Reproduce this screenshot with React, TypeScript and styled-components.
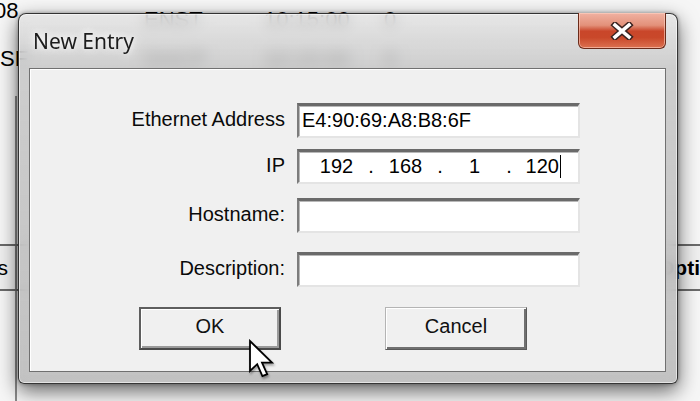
import React from "react";
import styled, { createGlobalStyle } from "styled-components";

const Global = createGlobalStyle`
  html, body { margin: 0; padding: 0; }
  body {
    width: 700px;
    height: 401px;
    overflow: hidden;
    background: #f4f4f4;
    font-family: "Liberation Sans", Arial, sans-serif;
  }
`;

const Desktop = styled.div`
  position: relative;
  width: 700px;
  height: 401px;
  overflow: hidden;
  background: #f6f6f6;
`;

/* ---------- background application (behind the dialog) ---------- */
const BgApp = styled.div`
  display: flex;
  flex-direction: column;
  width: 700px;
  height: 401px;
  color: #000;
`;

const BgRow = styled.div<{ $h: number }>`
  display: flex;
  align-items: flex-start;
  height: ${(p) => p.$h}px;
  margin-left: -6px;
  font-size: 22px;
  line-height: 22px;
  white-space: nowrap;
`;

const BgCell = styled.div<{ $w: number; $dy?: number }>`
  width: ${(p) => p.$w}px;
  flex: none;
  overflow: hidden;
  margin-top: ${(p) => p.$dy ?? 0}px;
`;

const BgSpacer = styled.div`
  flex: 1;
  display: flex;
`;

const BgStrip = styled.div`
  width: 15px;
  border-right: 2px solid #8a8a8a;
`;

const BgToolbar = styled.div`
  height: 43px;
  display: flex;
  align-items: center;
  border-top: 2px solid #6a6a6a;
  border-bottom: 2px solid #6a6a6a;
  background: #efefef;
  font-size: 21px;
  white-space: nowrap;
`;

const BgTab = styled.div<{ $w: number }>`
  width: ${(p) => p.$w}px;
  height: 100%;
  box-sizing: border-box;
  flex: none;
  display: flex;
  align-items: center;
  justify-content: flex-end;
  overflow: hidden;
  padding-right: 7px;
  border-right: 2px solid #7a7a7a;
`;

const BgRightTab = styled.div`
  margin-left: auto;
  width: 42px;
  height: 100%;
  display: flex;
  align-items: center;
  font-weight: 700;
  overflow: hidden;
`;

const BgBottom = styled.div`
  height: 110px;
  display: flex;
`;

/* ---------- the dialog window ---------- */
const Window = styled.div`
  position: absolute;
  left: 18px;
  top: 13px;
  width: 660px;
  height: 371px;
  box-sizing: border-box;
  display: flex;
  flex-direction: column;
  padding: 0 11px 11px 10px;
  border: 1px solid rgba(35, 35, 35, 0.9);
  border-radius: 8px 8px 6px 6px;
  background: linear-gradient(
    to bottom,
    rgba(226, 226, 226, 0.78) 0px,
    rgba(196, 196, 196, 0.82) 54px,
    rgba(188, 188, 188, 0.9) 100%
  );
  backdrop-filter: blur(7px);
  box-shadow: 0 7px 20px rgba(0, 0, 0, 0.6), 0 0 4px rgba(0, 0, 0, 0.35),
    inset 0 0 0 1px rgba(255, 255, 255, 0.55);
`;

const TitleBar = styled.div`
  height: 54px;
  flex: none;
  display: flex;
  justify-content: space-between;
  align-items: flex-start;
`;

const Title = styled.div`
  margin: 14px 0 0 4px;
  font-family: "Noto Sans", "Open Sans", sans-serif;
  font-size: 21px;
  line-height: 26px;
  color: #1c1c1c;
  text-shadow: 0 0 6px rgba(255, 255, 255, 0.95), 0 0 10px rgba(255, 255, 255, 0.8);
`;

const CloseButton = styled.div`
  margin-top: -1px;
  width: 88px;
  height: 36px;
  box-sizing: border-box;
  display: flex;
  align-items: center;
  justify-content: center;
  border: 1px solid #6b2b1a;
  border-top: none;
  border-radius: 0 0 6px 6px;
  background: linear-gradient(
    to bottom,
    #f0b2a2 0%,
    #e3917a 35%,
    #c9462a 52%,
    #c9482a 70%,
    #dc7150 100%
  );
  box-shadow: inset 0 0 0 1px rgba(255, 210, 195, 0.6);
`;

const Client = styled.div`
  flex: 1;
  display: flex;
  flex-direction: column;
  border: 1px solid #707070;
  background: #f0f0f0;
  box-shadow: inset 1px 1px 0 #ffffff;
  padding-top: 34px;
`;

const FormRow = styled.div<{ $mt: number }>`
  display: grid;
  grid-template-columns: 255px 283px;
  column-gap: 12px;
  align-items: center;
  margin-top: ${(p) => p.$mt}px;
`;

const Label = styled.div`
  text-align: right;
  font-size: 20px;
  line-height: 22px;
  color: #0a0a0a;
  padding-bottom: 3px;
`;

const Field = styled.div`
  height: 35px;
  box-sizing: border-box;
  display: flex;
  align-items: center;
  background: #ffffff;
  border-top: 3px solid #6a6a6a;
  border-left: 2px solid #7c7c7c;
  border-right: 2px solid #e4e4e4;
  border-bottom: 2px solid #e4e4e4;
  box-shadow: inset 1px 1px 0 #b8b8b8;
  padding-left: 3px;
  padding-bottom: 2px;
  font-size: 20px;
  color: #000;
  white-space: nowrap;
`;

const IpField = styled(Field)`
  padding-left: 12px;
`;

const IpSegment = styled.span`
  width: 51px;
  flex: none;
  text-align: center;
`;

const IpDot = styled.span`
  width: 18px;
  flex: none;
  text-align: center;
`;

const Caret = styled.span`
  display: inline-block;
  width: 1.5px;
  height: 23px;
  background: #000;
  vertical-align: -5px;
  margin-left: 1px;
`;

const ButtonRow = styled.div`
  display: flex;
  gap: 104px;
  margin-top: 20px;
  padding-left: 109px;
`;

const Button = styled.div<{ $default?: boolean }>`
  width: 142px;
  height: 43px;
  box-sizing: border-box;
  display: flex;
  align-items: center;
  justify-content: center;
  padding-bottom: 5px;
  font-size: 20px;
  color: #111;
  background: #f0f0f0;
  border: ${(p) => (p.$default ? "2px solid #5e5e5e" : "1px solid #b4b4b4")};
  border-right-color: ${(p) => (p.$default ? "#4a4a4a" : "#5a5a5a")};
  border-bottom-color: ${(p) => (p.$default ? "#4a4a4a" : "#5a5a5a")};
  box-shadow: ${(p) =>
    p.$default
      ? "inset 1px 1px 0 #ffffff, inset -2px -2px 0 #9a9a9a"
      : "inset 1px 1px 0 #ffffff, inset -2px -2px 0 #707070"};
`;

const Cursor = styled.svg`
  position: absolute;
  left: 248px;
  top: 339px;
  width: 28px;
  height: 40px;
  filter: drop-shadow(1px 2px 1px rgba(0, 0, 0, 0.35));
`;

export default function App() {
  return (
    <>
      <Global />
      <Desktop>
        <BgApp>
          <BgRow $h={48}>
            <BgCell $w={150}>08</BgCell>
            <BgCell $w={120} $dy={9}>ENST</BgCell>
            <BgCell $w={120} $dy={9}>10:15:00</BgCell>
            <BgCell $w={100} $dy={9}>0</BgCell>
          </BgRow>
          <BgRow $h={48}>
            <BgCell $w={150}>&nbsp;SF</BgCell>
            <BgCell $w={120}>DHCP</BgCell>
            <BgCell $w={120}>10:15:00</BgCell>
            <BgCell $w={100}>0</BgCell>
          </BgRow>
          <BgSpacer>
            <BgStrip />
          </BgSpacer>
          <BgToolbar>
            <BgTab $w={17}>Address</BgTab>
            <BgRightTab>Options</BgRightTab>
          </BgToolbar>
          <BgBottom>
            <BgStrip />
          </BgBottom>
        </BgApp>

        <Window>
          <TitleBar>
            <Title>New Entry</Title>
            <CloseButton>
              <svg width="24" height="18" viewBox="0 0 24 18">
                <path
                  d="M5 3 L19 15 M19 3 L5 15"
                  stroke="#3b2320"
                  strokeWidth="6.5"
                  strokeLinecap="square"
                />
                <path
                  d="M5 3 L19 15 M19 3 L5 15"
                  stroke="#ffffff"
                  strokeWidth="3.6"
                  strokeLinecap="square"
                />
              </svg>
            </CloseButton>
          </TitleBar>
          <Client>
            <FormRow $mt={0}>
              <Label>Ethernet Address</Label>
              <Field>E4:90:69:A8:B8:6F</Field>
            </FormRow>
            <FormRow $mt={11}>
              <Label>IP</Label>
              <IpField>
                <IpSegment>192</IpSegment>
                <IpDot>.</IpDot>
                <IpSegment>168</IpSegment>
                <IpDot>.</IpDot>
                <IpSegment>1</IpSegment>
                <IpDot>.</IpDot>
                <IpSegment>
                  120
                  <Caret />
                </IpSegment>
              </IpField>
            </FormRow>
            <FormRow $mt={14}>
              <Label>Hostname:</Label>
              <Field />
            </FormRow>
            <FormRow $mt={19}>
              <Label>Description:</Label>
              <Field />
            </FormRow>
            <ButtonRow>
              <Button $default>OK</Button>
              <Button>Cancel</Button>
            </ButtonRow>
          </Client>
        </Window>

        <Cursor viewBox="0 0 14 20">
          <path
            d="M1 1 L1 16 L4.6 12.6 L7.2 18.6 L9.6 17.6 L7 11.8 L12 11.8 Z"
            fill="#ffffff"
            stroke="#000000"
            strokeWidth="0.9"
            strokeLinejoin="miter"
          />
        </Cursor>
      </Desktop>
    </>
  );
}
